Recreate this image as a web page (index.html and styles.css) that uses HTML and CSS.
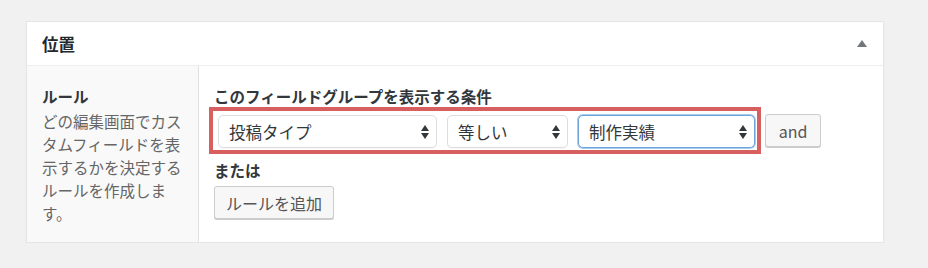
FILE: index.html
```html
<!DOCTYPE html>
<html lang="ja">
<head>
    <meta charset="UTF-8">
    <title>位置</title>
    <link rel="stylesheet" href="styles.css">
</head>
<body>
    <div class="postbox">
        <!-- Header -->
        <div class="postbox-header">
            <h2 class="postbox-title">位置</h2>
            <svg class="toggle" width="10" height="7" viewBox="0 0 10 7"><polygon points="5,0 10,7 0,7" fill="#72777c"/></svg>
        </div>

        <!-- Rules -->
        <div class="field-row">
            <div class="field-label">
                <div class="label-title">ルール</div>
                <p class="label-desc">どの編集画面でカスタムフィールドを表示するかを決定するルールを作成します。</p>
            </div>
            <div class="field-input">
                <div class="group-title">このフィールドグループを表示する条件</div>
                <div class="rule-line">
                    <div class="rule-box">
                        <div class="select select-param">
                            <span>投稿タイプ</span>
                            <svg class="updown" width="8" height="14" viewBox="0 0 8 14"><polygon points="4,0 8,6 0,6" fill="#32373c"/><polygon points="0,8 8,8 4,14" fill="#32373c"/></svg>
                        </div>
                        <div class="select select-op">
                            <span>等しい</span>
                            <svg class="updown" width="8" height="14" viewBox="0 0 8 14"><polygon points="4,0 8,6 0,6" fill="#32373c"/><polygon points="0,8 8,8 4,14" fill="#32373c"/></svg>
                        </div>
                        <div class="select select-value focused">
                            <span>制作実績</span>
                            <svg class="updown" width="8" height="14" viewBox="0 0 8 14"><polygon points="4,0 8,6 0,6" fill="#32373c"/><polygon points="0,8 8,8 4,14" fill="#32373c"/></svg>
                        </div>
                    </div>
                    <button class="button btn-and">and</button>
                </div>
                <div class="group-title or-title">または</div>
                <button class="button btn-add">ルールを追加</button>
            </div>
        </div>
    </div>
</body>
</html>
```
FILE: styles.css
```css
body {
    margin: 0;
    background: #f1f1f1;
    font-family: "Noto Sans CJK JP", "Liberation Sans", sans-serif;
    color: #32373c;
}

.postbox {
    box-sizing: border-box;
    width: 858px;
    margin: 21px 0 0 26px;
    background: #fff;
    border: 1px solid #e5e5e5;
    box-shadow: 0 1px 1px rgba(0, 0, 0, 0.05);
}

.postbox-header {
    display: flex;
    align-items: center;
    justify-content: space-between;
    height: 43px;
    padding: 0 15px;
    border-bottom: 1px solid #eee;
}

.postbox-title {
    margin: 0;
    font-size: 16.5px;
    font-weight: bold;
    color: #23282d;
    line-height: 22px;
}

.toggle {
    display: block;
    margin-right: 1px;
}

.field-row {
    display: flex;
}

.field-label {
    width: 141px;
    padding: 19px 15px 17px;
    background: #f9f9f9;
    border-right: 1px solid #e1e1e1;
}

.label-title {
    font-size: 15.5px;
    font-weight: bold;
    line-height: 22px;
    color: #32373c;
}

.label-desc {
    margin: 3px 0 0;
    font-size: 15.5px;
    line-height: 23px;
    color: #666;
}

.field-input {
    flex: 1;
    padding: 19px 15px 15px;
}

.group-title {
    font-size: 15.5px;
    font-weight: bold;
    line-height: 22px;
    color: #32373c;
}

.rule-line {
    display: flex;
    align-items: center;
}

.rule-box {
    display: flex;
    gap: 10px;
    margin-left: -5px;
    padding: 4px 2px 2px 5px;
    border: 4px solid #d75f5f;
}

.select {
    box-sizing: border-box;
    display: flex;
    align-items: center;
    justify-content: space-between;
    height: 33px;
    padding: 0 7px 0 10px;
    background: #fff;
    border: 1px solid #ddd;
    border-radius: 5px;
    box-shadow: 0 1px 1px rgba(0, 0, 0, 0.03);
    font-size: 16.5px;
    color: #32373c;
}

.select-param {
    width: 219px;
}

.select-op {
    width: 121px;
}

.select-value {
    width: 177px;
}

.select.focused {
    border-color: #6ea6dc;
    box-shadow: 0 0 0 1px #a9cbeb;
}

.updown {
    display: block;
}

.button {
    box-sizing: border-box;
    height: 33px;
    padding: 0 12px;
    background: #f7f7f7;
    border: 1px solid #ccc;
    border-radius: 3px;
    box-shadow: 0 1px 0 #ccc;
    font-family: inherit;
    font-size: 16px;
    color: #555;
}

.btn-and {
    width: 56px;
    margin-left: 4px;
    padding: 0;
}

.or-title {
    margin-top: 5px;
}

.btn-add {
    width: 120px;
    margin-top: 5px;
    padding: 0;
}
```
